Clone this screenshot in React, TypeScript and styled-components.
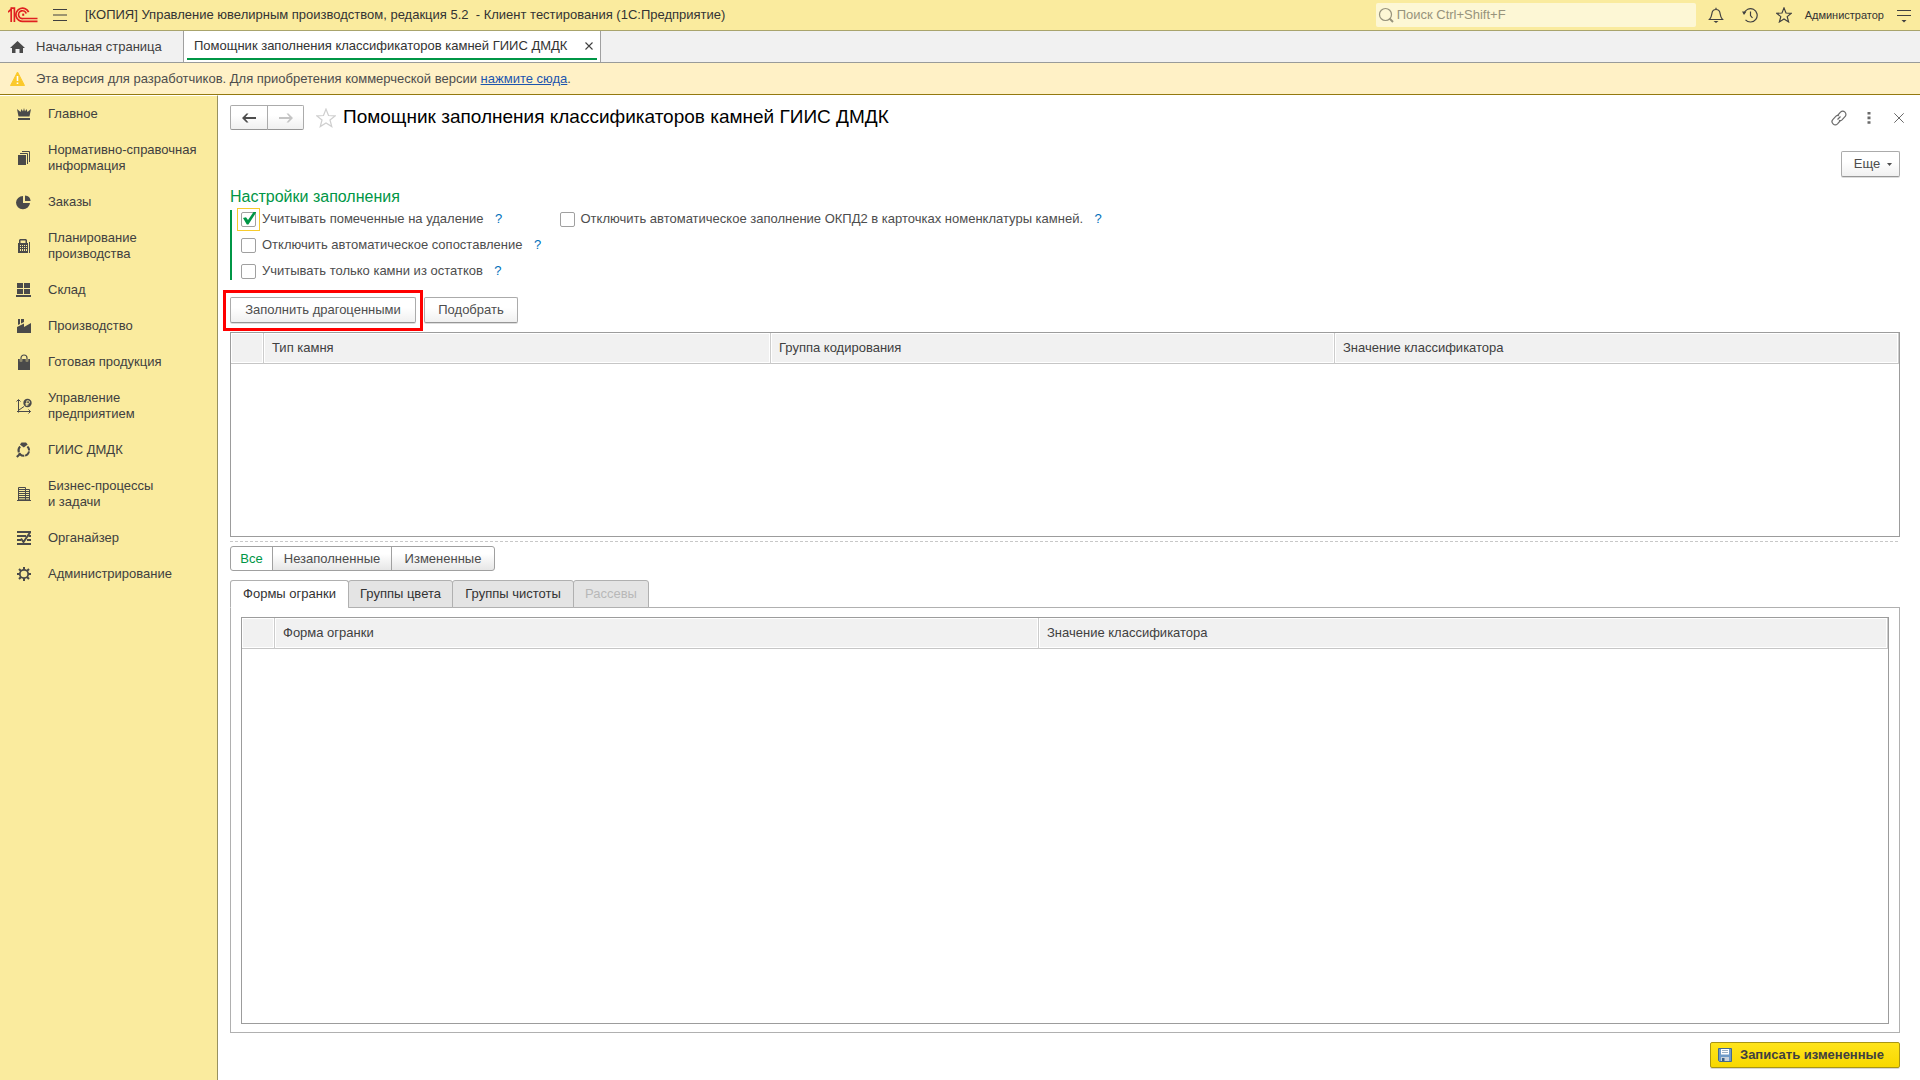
import React, { useState } from "react";
import styled, { createGlobalStyle, css } from "styled-components";

const GlobalStyle = createGlobalStyle`
  *, *::before, *::after { box-sizing: border-box; }
  body {
    margin: 0;
    background: #ffffff;
    color: #404040;
    font: 13px/16px "Liberation Sans", Arial, sans-serif;
  }
  button, input { font: inherit; color: inherit; }
  svg { display: block; flex: none; }
`;

const Page = styled.div`
  display: flex;
  flex-direction: column;
  min-height: 100vh;
`;

/* ---------- window header ---------- */

const TopBar = styled.header`
  display: flex;
  align-items: center;
  height: 31px;
  padding-left: 8px;
  background: #faeb9e;
  border-bottom: 1px solid #a9a46c;
  color: #333333;
`;

const IconButton = styled.button<{ $width?: number }>`
  display: flex;
  align-items: center;
  justify-content: center;
  width: ${(p) => p.$width ?? 34}px;
  height: 24px;
  padding: 0;
  border: 0;
  background: none;
  color: #404040;
`;

const AppTitle = styled.div`
  flex: 1;
  padding-left: 3px;
  white-space: pre;
`;

const SearchBox = styled.label`
  display: flex;
  align-items: center;
  gap: 3px;
  width: 320px;
  height: 24px;
  margin-right: 3px;
  padding: 0 2px;
  border-radius: 2px;
  background: #fdf7d5;
  color: #97937c;
`;

const SearchInput = styled.input`
  flex: 1;
  min-width: 0;
  height: 24px;
  padding: 0 0 2px;
  border: 0;
  outline: 0;
  background: none;
  &::placeholder { color: #97937c; opacity: 1; }
`;

const UserButton = styled.button`
  height: 24px;
  margin: 0 4px;
  padding: 0;
  border: 0;
  background: none;
  color: #333333;
  font-size: 11px;
`;

const TabStrip = styled.nav`
  display: flex;
  height: 32px;
  background: #f1f1f1;
  border-bottom: 1px solid #999b9a;
`;

const HomeTab = styled.a`
  display: flex;
  align-items: center;
  gap: 11px;
  width: 184px;
  padding-left: 10px;
  border-right: 1px solid #a0a0a0;
  color: #404040;
  text-decoration: none;
`;

const OpenTab = styled.div`
  display: flex;
  min-width: 417px;
  padding: 0 3px 2px;
  border-right: 1px solid #a0a0a0;
  background: #ffffff;
  color: #333333;
`;

const OpenTabBody = styled.div`
  display: flex;
  flex: 1;
  align-items: center;
  justify-content: space-between;
  padding: 3px 0 0 7px;
  border-bottom: 2px solid #009646;
`;

const Notice = styled.div`
  display: flex;
  align-items: center;
  gap: 11px;
  height: 32px;
  padding: 0 10px;
  background: #fff1c6;
  border-bottom: 1px solid #94790f;
  color: #4d4d4d;
`;

const NoticeLink = styled.a`
  color: #1c55ae;
  text-decoration: underline;
`;

/* ---------- sections ---------- */

const Body = styled.div`
  display: flex;
  flex: 1;
`;

const Sidebar = styled.nav`
  flex: none;
  width: 218px;
  background: #faeb9e;
  border-top: 1px solid #ffffff;
  border-right: 1px solid #98915f;
`;

const Section = styled.a`
  display: flex;
  align-items: center;
  gap: 16px;
  padding: 10px 8px 10px 16px;
  color: #404040;
  text-decoration: none;
  white-space: pre-line;
`;

/* ---------- form ---------- */

const Main = styled.main`
  display: flex;
  flex: 1;
  flex-direction: column;
  min-width: 0;
  padding: 10px 20px 12px 12px;
`;

const FormHeader = styled.div`
  display: flex;
  align-items: center;
  height: 25px;
`;

const face = css`
  border: 1px solid #ababab;
  border-bottom-color: #969696;
  background: linear-gradient(#ffffff 40%, #f0f0f0);
  color: #4d4d4d;
`;

const History = styled.div`
  display: flex;
`;

const HistoryButton = styled.button`
  ${face}
  display: flex;
  align-items: center;
  justify-content: center;
  width: 38px;
  height: 25px;
  padding: 0;
  border-radius: 2px 0 0 2px;
  & + & {
    width: 37px;
    margin-left: -1px;
    border-radius: 0 2px 2px 0;
    color: #c4c4c4;
  }
`;

const FavoriteButton = styled(IconButton)`
  padding-left: 4px;
`;

const FormTitle = styled.h1`
  flex: 1;
  margin: 0;
  padding-bottom: 2px;
  color: #000000;
  font-size: 19px;
  font-weight: 400;
  line-height: 24px;
`;

const HeaderTools = styled.div`
  display: flex;
  margin-right: -14px;
  & > button { color: #6a6a6a; }
`;

const Button = styled.button<{ $width?: number }>`
  ${face}
  display: flex;
  align-items: center;
  justify-content: center;
  gap: 7px;
  min-width: ${(p) => p.$width ?? 59}px;
  height: 26px;
  padding: 0 8px;
  border-radius: 2px;
  box-shadow: 0 1px #dddddd;
`;

const MoreButton = styled(Button)`
  padding: 0 6px 0 11px;
`;

const CommandBar = styled.div`
  display: flex;
  justify-content: flex-end;
  margin-top: 21px;
`;

const GroupTitle = styled.h2`
  margin: 10px 0 3px;
  color: #009646;
  font-size: 16px;
  font-weight: 400;
  line-height: 20px;
`;

const Settings = styled.div`
  display: grid;
  grid-template-columns: auto 1fr;
  justify-content: start;
  column-gap: 15px;
  row-gap: 10px;
  padding: 1px 0 1px 9px;
  border-left: 2px solid #009646;
`;

const CheckRow = styled.div`
  display: flex;
  align-items: center;
  height: 16px;
  grid-column-start: 1;
  &:nth-child(2) { grid-column-start: 2; }
`;

const CheckLabel = styled.label`
  display: flex;
  align-items: center;
  gap: 6px;
  color: #4d4d4d;
`;

const CheckBox = styled.span<{ $focused: boolean }>`
  display: grid;
  place-items: center;
  width: 15px;
  height: 15px;
  outline: ${(p) => (p.$focused ? "1px solid #f7cb2d" : "none")};
  outline-offset: 3px;
  & > * { grid-area: 1 / 1; }
`;

const CheckInput = styled.input`
  appearance: none;
  width: 15px;
  height: 15px;
  margin: 0;
  border: 1px solid #a0a0a0;
  border-radius: 2px;
  outline: 0;
  background: #ffffff;
`;

const Mark = styled.svg`
  z-index: 1;
  pointer-events: none;
`;

const Help = styled.button`
  width: 14px;
  margin-left: 8px;
  padding: 0;
  border: 0;
  background: none;
  color: #0070ba;
  text-align: center;
`;

const Actions = styled.div`
  display: flex;
  gap: 8px;
  margin: 17px 0 9px;
`;

const Marked = styled.div`
  position: relative;
  &::after {
    content: "";
    position: absolute;
    inset: -7px -7px -8px;
    border: 3px solid #ff0000;
    pointer-events: none;
  }
`;

const Grid = styled.div<{ $grow?: boolean }>`
  flex: ${(p) => (p.$grow ? "1 0 205px" : "0 0 205px")};
  border: 1px solid #9c9c9c;
  background: #ffffff;
`;

const Table = styled.table`
  width: 100%;
  table-layout: fixed;
  border-spacing: 0;
  text-align: left;
`;

const HeadCell = styled.th<{ $width?: string }>`
  width: ${(p) => p.$width ?? "auto"};
  height: 31px;
  padding: 0 0 1px 8px;
  border-right: 1px solid #cccccc;
  border-bottom: 1px solid #c6c6c6;
  background: #f1f1f1;
  box-shadow: inset 0 0 0 1px #ffffff;
  color: #404040;
  font-weight: 400;
`;

const Splitter = styled.div`
  height: 1px;
  margin: 4px 0;
  background: repeating-linear-gradient(90deg, #c8c8c8 0 3px, transparent 3px 5px);
`;

const Segments = styled.div`
  display: flex;
`;

const Segment = styled.button<{ $width: number }>`
  ${face}
  min-width: ${(p) => p.$width}px;
  height: 25px;
  padding: 0 8px;
  border-color: #a0a0a0;
  background: linear-gradient(#ffffff 30%, #e6e6e6);
  & + & { margin-left: -1px; }
  &:first-child { border-radius: 3px 0 0 3px; }
  &:last-child { border-radius: 0 3px 3px 0; }
  &[aria-pressed="true"] {
    background: #ffffff;
    color: #009646;
  }
`;

const TabList = styled.div`
  display: flex;
  z-index: 1;
  margin: 9px 0 -1px;
`;

const Tab = styled.button<{ $width: number }>`
  min-width: ${(p) => p.$width}px;
  height: 28px;
  padding: 0 8px 1px;
  border: 1px solid #b0b0b0;
  border-radius: 3px 3px 0 0;
  background: #e4e4e4;
  color: #333333;
  & + & { margin-left: -1px; }
  &[aria-selected="true"] {
    background: #ffffff;
    border-bottom-color: #ffffff;
  }
  &:disabled { color: #b8b8b8; }
`;

const TabPanel = styled.div`
  display: flex;
  flex: 1;
  flex-direction: column;
  padding: 9px 10px 8px;
  border: 1px solid #b0b0b0;
`;

const Footer = styled.footer`
  display: flex;
  justify-content: flex-end;
  margin-top: 9px;
`;

const SaveButton = styled.button`
  display: flex;
  align-items: center;
  gap: 8px;
  min-width: 190px;
  height: 26px;
  padding: 0 12px 0 7px;
  border: 1px solid #a89515;
  border-radius: 2px;
  background: linear-gradient(#ffe41c, #f8d800);
  box-shadow: 0 1px #d8d8d8;
  color: #404040;
  font-weight: 700;
`;

/* ---------- drawings ---------- */

const Logo = () => (
  <svg width="30" height="16" viewBox="0 0 30 16" fill="none" stroke="#e02020" strokeWidth="1.7">
    <path d="M0 5.2 L3.2 2.2 V15" />
    <path d="M2.5 1.2 H6.4 V15" />
    <path d="M20.6 5.2 A6.6 6.6 0 1 0 15.5 14.3 H29.5" />
    <path d="M18.2 6.6 A3.9 3.9 0 1 0 15.3 11.5 H29.5" />
    <path d="M16.2 7.7 H14.2" strokeWidth="2.2" />
  </svg>
);

const Stroke = ({ size = 16, width = 1.2, children }: { size?: number; width?: number; children: React.ReactNode }) => (
  <svg width={size} height={size} viewBox="0 0 16 16" fill="none" stroke="currentColor" strokeWidth={width}>
    {children}
  </svg>
);

const Solid = ({ children }: { children: React.ReactNode }) => (
  <svg width="16" height="16" viewBox="0 0 16 16" fill="#4a4a4a">
    {children}
  </svg>
);

const starPath = "M8 .9 L10 6 L15.3 6.3 L11.2 9.6 L12.6 14.9 L8 12 L3.4 14.9 L4.8 9.6 L.7 6.3 L6 6 Z";

const CrownIcon = () => (
  <Solid>
    <path d="M1 3 L4.5 6 L5.5 3 L7 5.5 L8 2 L9 5.5 L10.5 3 L11.5 6 L15 3 L13.5 10.5 H2.5 Z M2 12 H14 V14 H2 Z" />
  </Solid>
);
const BooksIcon = () => (
  <Solid>
    <path d="M2 5 H10 V15 H2 Z" />
    <path d="M4 3.5 H11.5 V14 M6 1.5 H13.5 V12" fill="none" stroke="#4a4a4a" />
  </Solid>
);
const PieIcon = () => (
  <Solid>
    <path d="M7 2 V9 H14 A7 6.6 0 1 1 7 2 Z" />
    <path d="M9 1.5 A6 6 0 0 1 14.6 7 H9 Z" />
  </Solid>
);
const CalculatorIcon = () => (
  <Solid>
    <path fillRule="evenodd" d="M4 1 H10 L11 2 V5 H12 V15 H2 V5 H3 V2 Z M4.5 2.5 V5 H9.5 V2.5 Z M4 7 V8 H5 V7 Z M6 7 V8 H7 V7 Z M8 7 V8 H9 V7 Z M10 7 V8 H11 V7 Z M4 9 V10 H5 V9 Z M6 9 V10 H7 V9 Z M8 9 V10 H9 V9 Z M10 9 V10 H11 V9 Z M4 11 V13 H5 V11 Z M6 11 V13 H7 V11 Z M8 11 V13 H9 V11 Z M10 11 V13 H11 V11 Z" />
    <path d="M13 4 H14 V15 H13 Z" />
  </Solid>
);
const WarehouseIcon = () => (
  <Solid>
    <path d="M1 1 H7 V6 H1 Z M8 1 H14 V6 H8 Z M1 7 H7 V12 H1 Z M8 7 H14 V12 H8 Z M0 13 H15 V15 H0 Z" />
  </Solid>
);
const FactoryIcon = () => (
  <Solid>
    <path d="M2 1 H4 V6 L2 7 Z M5 1 H8 V4 L5 5.5 Z M1 9 L8 5.5 V9 L15 5 V15 H1 Z" />
  </Solid>
);
const BagIcon = () => (
  <Solid>
    <path d="M2 5 H14 V16 H2 Z" />
    <path d="M5 7.5 V4 A3 3 0 0 1 11 4 V7.5" fill="none" stroke="#faeb9e" strokeWidth="2.4" />
    <path d="M5 7.5 V4 A3 3 0 0 1 11 4 V7.5" fill="none" stroke="#4a4a4a" strokeWidth="1.2" />
  </Solid>
);
const ChartIcon = () => (
  <Solid>
    <path d="M2.5 14.5 V2 M.5 3.5 L2.5 1.5 L4.5 3.5 M1 13.5 H14.5 M12.5 11.5 L14.5 13.5 L12.5 15.5 M3 12 L8 8.5" fill="none" stroke="#4a4a4a" />
    <circle cx="11.5" cy="5" r="4.2" />
    <path d="M10.8 8 V2.8 H12.2 A1.3 1.3 0 0 1 12.2 5.5 H9.5 M9.5 6.8 H12.5" fill="none" stroke="#faeb9e" strokeWidth=".9" />
  </Solid>
);
const RingIcon = () => (
  <Solid>
    <path d="M5.5 .5 H10 L11.7 2.5 L7.8 5.6 L3.9 2.5 Z" />
    <path d="M4.2 4.6 A5.3 5.3 0 1 0 11.4 4.6" fill="none" stroke="#4a4a4a" strokeWidth="2" strokeDasharray="6 .8" />
    <path d="M4.5 11.5 L.8 15" fill="none" stroke="#4a4a4a" strokeWidth="2.2" />
  </Solid>
);
const BuildingIcon = () => (
  <Solid>
    <path d="M2.5 14 V1.5 H9.5 V14 M9.5 3.5 H13.5 V14 M1 14.5 H15" fill="none" stroke="#4a4a4a" />
    <path d="M3 3.5 H9 M3 5.5 H13 M3 7.5 H13 M3 9.5 H13 M3 11.5 H13 M3 13.2 H13" fill="none" stroke="#4a4a4a" />
  </Solid>
);
const ChecklistIcon = () => (
  <Solid>
    <path d="M1 2 H15 M1 6 H10 M12.5 6 H15 M1 10 H5 M11 10 H15 M1 14 H15" fill="none" stroke="#4a4a4a" strokeWidth="2" />
    <path d="M5 8.5 L7.5 12 L14 2.5" fill="none" stroke="#4a4a4a" strokeWidth="2" />
  </Solid>
);
const GearIcon = () => (
  <Solid>
    <circle cx="8" cy="8" r="4.2" fill="none" stroke="#4a4a4a" strokeWidth="1.8" />
    <path d="M8 1 V4 M8 12 V15 M1 8 H4 M12 8 H15 M3 3 L5 5 M11 11 L13 13 M3 13 L5 11 M11 5 L13 3" stroke="#4a4a4a" strokeWidth="2" />
  </Solid>
);

const CaretDown = () => (
  <svg width="5" height="3" viewBox="0 0 5 3" fill="currentColor">
    <path d="M0 0 H5 L2.5 3 Z" />
  </svg>
);

const ArrowIcon = ({ back }: { back?: boolean }) => (
  <svg width="14" height="10" viewBox="0 0 14 10" fill="currentColor">
    <path d={back ? "M0 5 L4.5 .5 H6.5 L3.5 4 H14 V6 H3.5 L6.5 9.5 H4.5 Z" : "M14 5 L9.5 .5 H7.5 L10.5 4 H0 V6 H10.5 L7.5 9.5 H9.5 Z"} />
  </svg>
);

const FloppyIcon = () => (
  <svg width="14" height="14" viewBox="0 0 14 14">
    <path d="M.5 .5 H13.5 V13.5 H1.5 L.5 12.5 Z" fill="#6f9bc8" stroke="#456a8f" />
    <path d="M3 1 H11 V6.5 H3 Z" fill="#ffffff" />
    <path d="M4 2.5 H10 M4 4.5 H10" stroke="#9ab0c4" />
    <path d="M3 9 H11 V13 H3 Z" fill="#c8d2dc" />
    <path d="M4 10 H6.5 V13 H4 Z" fill="#3d6288" />
  </svg>
);

/* ---------- data ---------- */

const sections = [
  { title: "Главное", icon: <CrownIcon /> },
  { title: "Нормативно-справочная\nинформация", icon: <BooksIcon /> },
  { title: "Заказы", icon: <PieIcon /> },
  { title: "Планирование\nпроизводства", icon: <CalculatorIcon /> },
  { title: "Склад", icon: <WarehouseIcon /> },
  { title: "Производство", icon: <FactoryIcon /> },
  { title: "Готовая продукция", icon: <BagIcon /> },
  { title: "Управление\nпредприятием", icon: <ChartIcon /> },
  { title: "ГИИС ДМДК", icon: <RingIcon /> },
  { title: "Бизнес-процессы\nи задачи", icon: <BuildingIcon /> },
  { title: "Органайзер", icon: <ChecklistIcon /> },
  { title: "Администрирование", icon: <GearIcon /> },
];

const options = [
  "Учитывать помеченные на удаление",
  "Отключить автоматическое заполнение ОКПД2 в карточках номенклатуры камней.",
  "Отключить автоматическое сопоставление",
  "Учитывать только камни из остатков",
];

const filters = [
  { name: "Все", width: 43 },
  { name: "Незаполненные", width: 120 },
  { name: "Измененные", width: 104 },
];

const tabs = [
  { name: "Формы огранки", width: 119 },
  { name: "Группы цвета", width: 105 },
  { name: "Группы чистоты", width: 122 },
  { name: "Рассевы", width: 76, disabled: true },
];

export default function App() {
  const [checked, setChecked] = useState([true, false, false, false]);
  const [filter, setFilter] = useState(0);
  const [tab, setTab] = useState(0);

  return (
    <Page>
      <GlobalStyle />
      <TopBar>
        <Logo />
        <IconButton $width={44} aria-label="Меню">
          <Stroke width={1.1}>
            <path d="M1 2.5 H15 M1 8 H15 M1 13.5 H15" />
          </Stroke>
        </IconButton>
        <AppTitle>{"[КОПИЯ] Управление ювелирным производством, редакция 5.2  - Клиент тестирования (1С:Предприятие)"}</AppTitle>
        <SearchBox>
          <Stroke>
            <circle cx="7.5" cy="7.5" r="6" />
            <path d="M11.5 11.5 L15 15" strokeWidth="2" />
          </Stroke>
          <SearchInput placeholder="Поиск Ctrl+Shift+F" aria-label="Поиск" />
        </SearchBox>
        <IconButton aria-label="Уведомления">
          <Stroke>
            <path d="M1.5 12.5 C3.5 10.5 3.5 9 4 6 C4.4 3.5 6 2.5 8 2.5 C10 2.5 11.6 3.5 12 6 C12.5 9 12.5 10.5 14.5 12.5 Z M8 .8 V2.5" />
            <path d="M5.5 14 H10.5 L8 16 Z" fill="currentColor" stroke="none" />
          </Stroke>
        </IconButton>
        <IconButton aria-label="История">
          <Stroke>
            <path d="M2 6.5 A6.7 6.7 0 1 1 3.5 12.8 M8.5 4.5 V8.5 L10.5 11" />
            <path d="M0 4.5 H4.5 L2 8 Z" fill="currentColor" stroke="none" />
          </Stroke>
        </IconButton>
        <IconButton aria-label="Избранное">
          <Stroke>
            <path d={starPath} />
          </Stroke>
        </IconButton>
        <UserButton>Администратор</UserButton>
        <IconButton $width={32} aria-label="Сервис">
          <Stroke>
            <path d="M1 3.5 H15 M1 8.5 H15" />
            <path d="M5.5 13 H10.5 L8 15.5 Z" fill="currentColor" stroke="none" />
          </Stroke>
        </IconButton>
      </TopBar>

      <TabStrip>
        <HomeTab href="#home">
          <svg width="15" height="14" viewBox="0 0 15 14" fill="#4a4a4a">
            <path d="M7.5 1 L15 8 H13 V13 H9.5 V9 H5.5 V13 H2 V8 H0 Z" />
          </svg>
          Начальная страница
        </HomeTab>
        <OpenTab>
          <OpenTabBody>
            Помощник заполнения классификаторов камней ГИИС ДМДК
            <IconButton $width={16} aria-label="Закрыть вкладку">
              <svg width="8" height="8" viewBox="0 0 8 8" stroke="currentColor" strokeWidth="1.1">
                <path d="M.5 .5 L7.5 7.5 M7.5 .5 L.5 7.5" />
              </svg>
            </IconButton>
          </OpenTabBody>
        </OpenTab>
      </TabStrip>

      <Notice>
        <svg width="15" height="15" viewBox="0 0 15 15">
          <path d="M7.5 1 L14.5 14.5 H.5 Z" fill="#fbc92a" stroke="#fbc92a" strokeLinejoin="round" />
          <path d="M7.5 5 V10 M7.5 11.5 V13" stroke="#ffffff" strokeWidth="1.6" />
        </svg>
        <span>
          Эта версия для разработчиков. Для приобретения коммерческой версии{" "}
          <NoticeLink href="#buy">нажмите сюда</NoticeLink>.
        </span>
      </Notice>

      <Body>
        <Sidebar>
          {sections.map((s) => (
            <Section key={s.title} href="#section">
              {s.icon}
              {s.title}
            </Section>
          ))}
        </Sidebar>

        <Main>
          <FormHeader>
            <History>
              <HistoryButton aria-label="Назад"><ArrowIcon back /></HistoryButton>
              <HistoryButton aria-label="Вперед"><ArrowIcon /></HistoryButton>
            </History>
            <FavoriteButton $width={39} aria-label="В избранное">
              <svg width="20" height="20" viewBox="0 0 16 16" fill="none" stroke="#cfcfcf">
                <path d={starPath} />
              </svg>
            </FavoriteButton>
            <FormTitle>Помощник заполнения классификаторов камней ГИИС ДМДК</FormTitle>
            <HeaderTools>
              <IconButton $width={30} aria-label="Ссылка">
                <Stroke>
                  <path d="M6.5 5.5 L9.5 2.2 A3.1 3.1 0 0 1 14 6.6 L11 9.8 A2.6 2.6 0 0 1 8 10.3 M9.5 10.5 L6.5 13.8 A3.1 3.1 0 0 1 2 9.4 L5 6.2 A2.6 2.6 0 0 1 8 5.7 M6.5 9.5 L9.5 6.5" />
                </Stroke>
              </IconButton>
              <IconButton $width={30} aria-label="Дополнительно">
                <svg width="4" height="12" viewBox="0 0 4 12" fill="currentColor">
                  <path d="M.5 0 H3.5 V2.6 H.5 Z M.5 4.6 H3.5 V7.2 H.5 Z M.5 9.2 H3.5 V11.8 H.5 Z" />
                </svg>
              </IconButton>
              <IconButton $width={30} aria-label="Закрыть">
                <svg width="10" height="10" viewBox="0 0 10 10" stroke="currentColor">
                  <path d="M.3 .3 L9.7 9.7 M9.7 .3 L.3 9.7" />
                </svg>
              </IconButton>
            </HeaderTools>
          </FormHeader>

          <CommandBar>
            <MoreButton>
              Еще
              <CaretDown />
            </MoreButton>
          </CommandBar>

          <GroupTitle>Настройки заполнения</GroupTitle>
          <Settings>
            {options.map((label, i) => (
              <CheckRow key={label}>
                <CheckLabel>
                  <CheckBox $focused={i === 0}>
                    <CheckInput
                      type="checkbox"
                      checked={checked[i]}
                      onChange={() => setChecked(checked.map((c, n) => (n === i ? !c : c)))}
                    />
                    {checked[i] && (
                      <Mark width="15" height="15" viewBox="0 0 15 15">
                        <path d="M2 6 L5 5.2 L7 8 L12.5 0 H15.5 L7.4 12.5 H5.8 Z" fill="#009646" />
                      </Mark>
                    )}
                  </CheckBox>
                  {label}
                </CheckLabel>
                <Help aria-label="Подсказка">?</Help>
              </CheckRow>
            ))}
          </Settings>

          <Actions>
            <Marked>
              <Button $width={186}>Заполнить драгоценными</Button>
            </Marked>
            <Button $width={94}>Подобрать</Button>
          </Actions>

          <Grid>
            <Table>
              <thead>
                <tr>
                  <HeadCell $width="33px" aria-label="Отметка" />
                  <HeadCell $width="507px">Тип камня</HeadCell>
                  <HeadCell>Группа кодирования</HeadCell>
                  <HeadCell>Значение классификатора</HeadCell>
                </tr>
              </thead>
              <tbody />
            </Table>
          </Grid>

          <Splitter />

          <Segments>
            {filters.map((f, i) => (
              <Segment key={f.name} $width={f.width} aria-pressed={filter === i} onClick={() => setFilter(i)}>
                {f.name}
              </Segment>
            ))}
          </Segments>

          <TabList role="tablist">
            {tabs.map((t, i) => (
              <Tab
                key={t.name}
                $width={t.width}
                role="tab"
                aria-selected={tab === i}
                disabled={t.disabled}
                onClick={() => setTab(i)}
              >
                {t.name}
              </Tab>
            ))}
          </TabList>
          <TabPanel role="tabpanel">
            <Grid $grow>
              <Table>
                <thead>
                  <tr>
                    <HeadCell $width="33px" aria-label="Отметка" />
                    <HeadCell $width="764px">Форма огранки</HeadCell>
                    <HeadCell>Значение классификатора</HeadCell>
                  </tr>
                </thead>
                <tbody />
              </Table>
            </Grid>
          </TabPanel>

          <Footer>
            <SaveButton>
              <FloppyIcon />
              Записать измененные
            </SaveButton>
          </Footer>
        </Main>
      </Body>
    </Page>
  );
}
